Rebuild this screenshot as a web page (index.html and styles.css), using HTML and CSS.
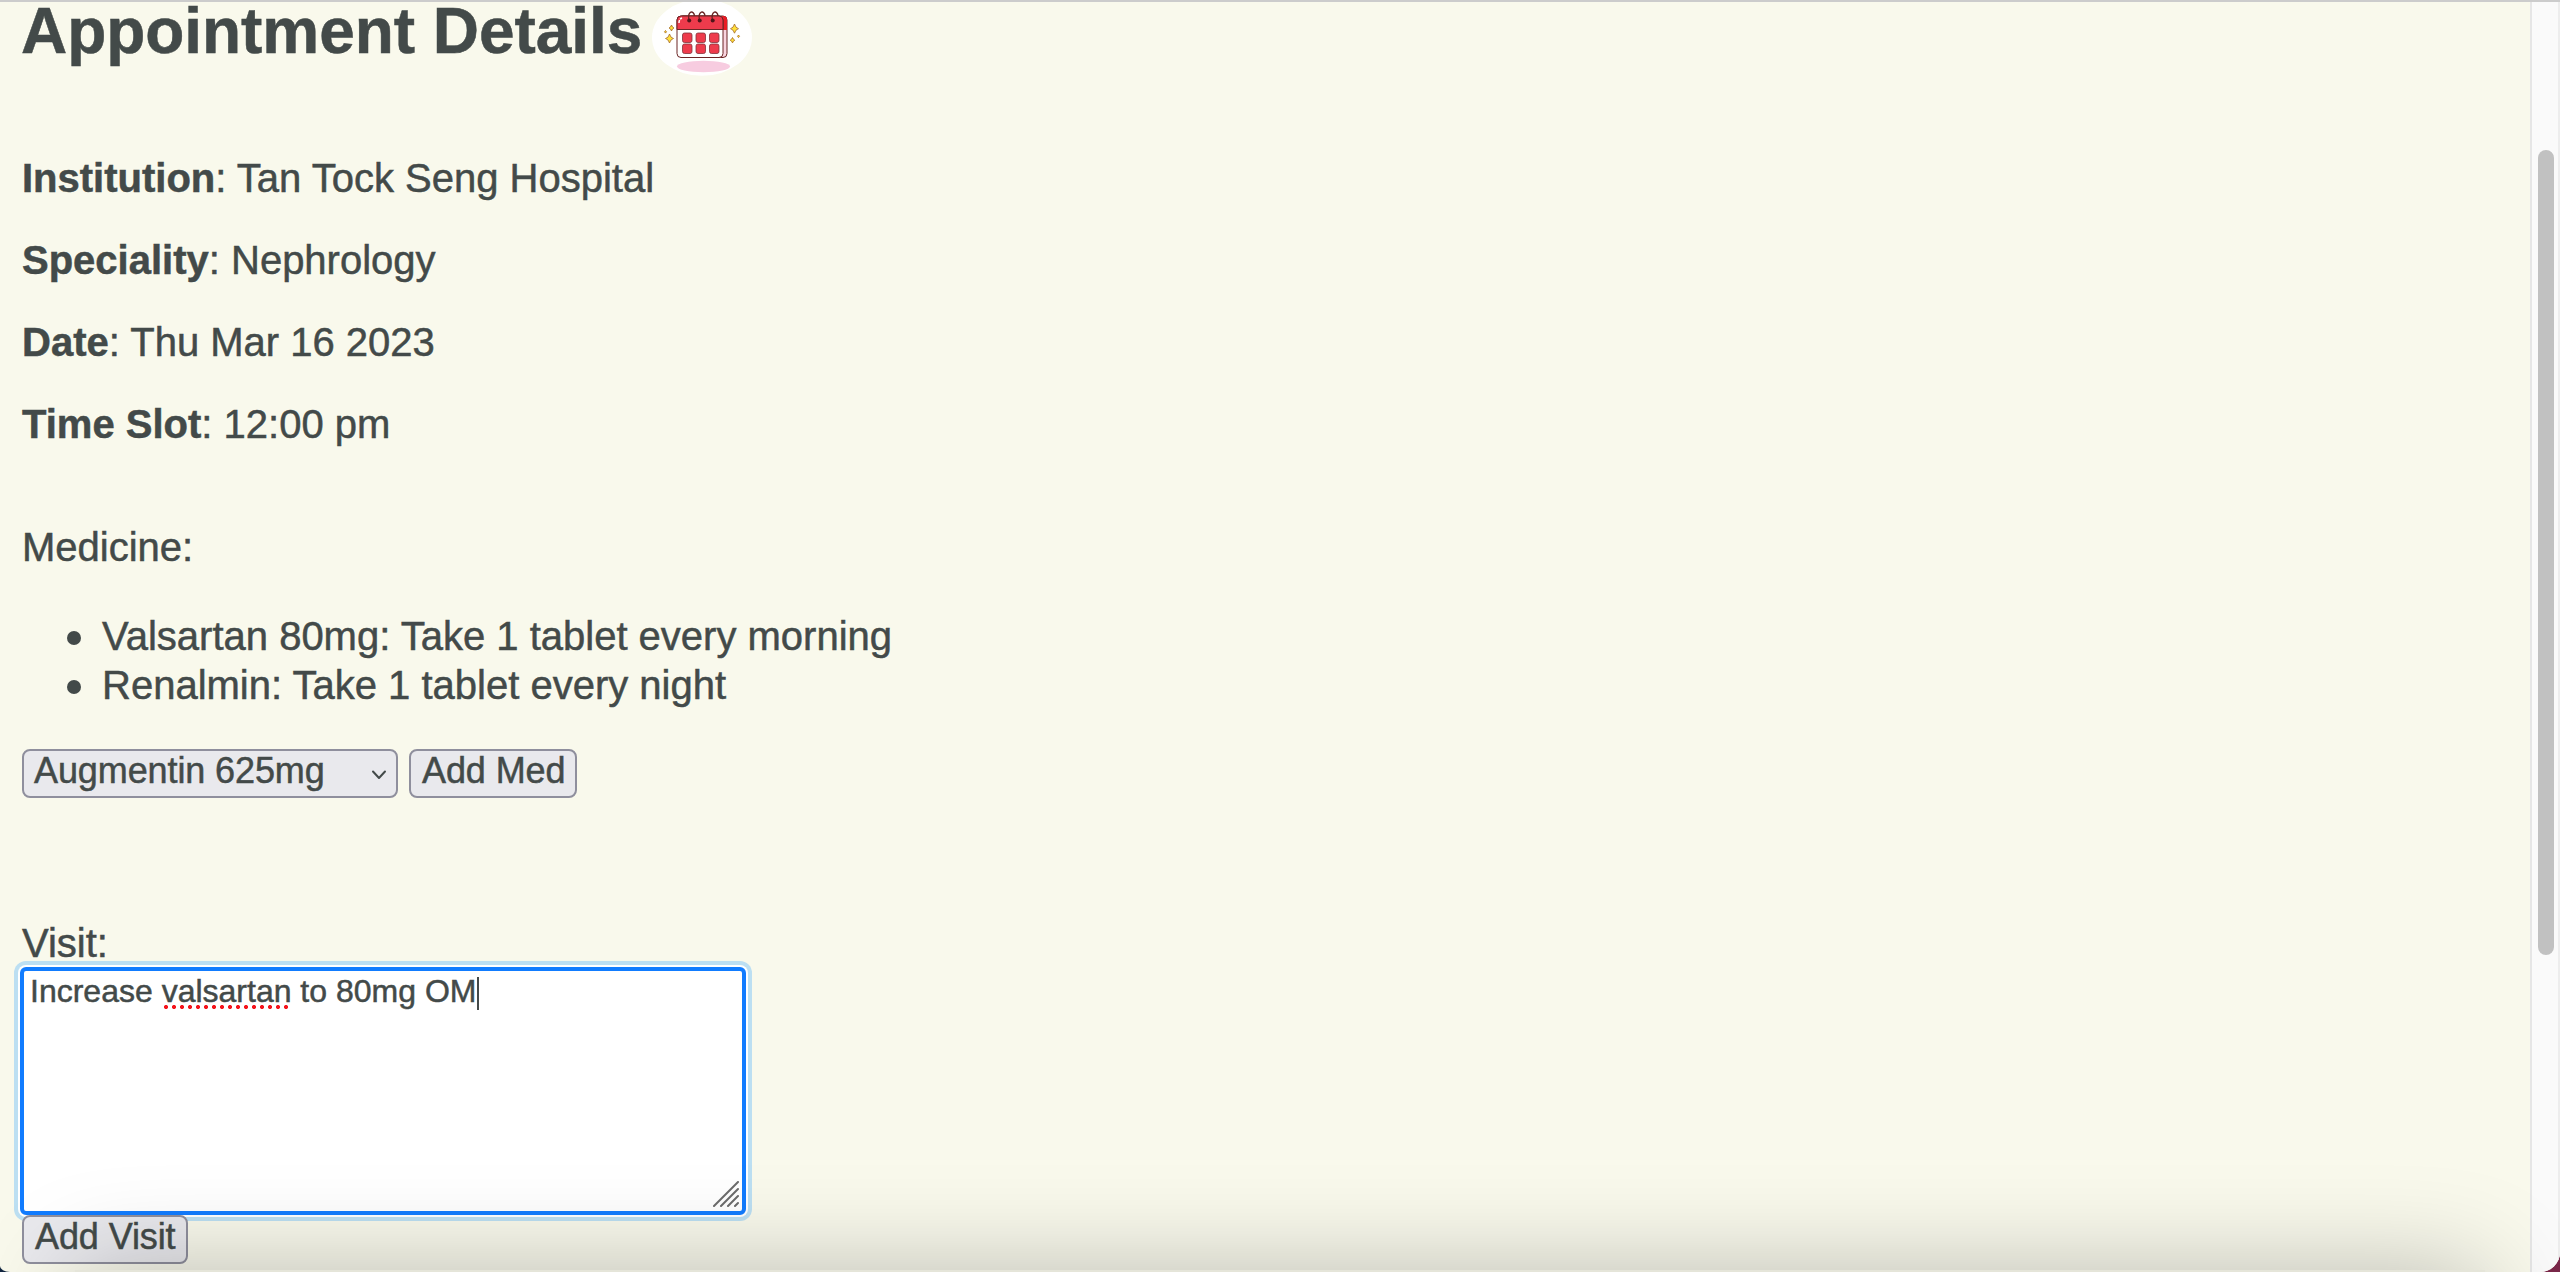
FILE: index.html
```html
<!DOCTYPE html>
<html lang="en">
<head>
<meta charset="utf-8">
<title>Appointment Details</title>
<link rel="stylesheet" href="styles.css">
</head>
<body>
<div class="window">
  <main class="page">
    <header class="heading">
      <h1>Appointment Details</h1>
      <svg class="calendar" viewBox="0 2 100 76" width="100" height="76">
        <ellipse cx="50" cy="37.5" rx="50" ry="38.3" fill="#fff"/>
        <ellipse cx="51.5" cy="66.500" rx="26.500" ry="5.700" fill="#f7cce0"/>
        <rect x="27" y="16" width="48" height="41.500" rx="4" fill="#f9d5df" stroke="#6b2525" stroke-width="1"/>
        <path d="M67 16h4a4 4 0 0 1 4 4v10h-6z" fill="#e91c24"/>
        <rect x="25" y="16" width="46" height="41.500" rx="4" fill="#fff" stroke="#6b2525" stroke-width="1"/>
        <path d="M25 29.500V20a4 4 0 0 1 4-4h38a4 4 0 0 1 4 4v9.500z" fill="#ee3b4c" stroke="#6b2525" stroke-width="1"/>
        <path d="M27 23q0-4 3-5" fill="none" stroke="#fff" stroke-width="1.500" stroke-dasharray="3 1"/>
        <g fill="#ee3b4c" stroke="#83323a" stroke-width=".8">
          <rect x="30.500" y="33" width="9.500" height="9.500" rx="2"/><rect x="44" y="33" width="9.500" height="9.500" rx="2"/><rect x="57.500" y="33" width="9.500" height="9.500" rx="2"/>
          <rect x="30.500" y="44" width="9.500" height="9.500" rx="2"/><rect x="44" y="44" width="9.500" height="9.500" rx="2"/><rect x="57.500" y="44" width="9.500" height="9.500" rx="2"/>
        </g>
        <path d="M37 21c-2-11 5-11 5.500-5M47.500 21c-2-11 5-11 5.500-5M60.500 21c-2-11 5-11 5.500-5" fill="none" stroke="#6b2525" stroke-width="1.400"/>
        <g fill="#501519"><circle cx="37.200" cy="20.500" r="2"/><circle cx="47.700" cy="20.500" r="2"/><circle cx="60.700" cy="20.500" r="2"/></g>
        <g fill="#ffe03a" stroke="#a66a20" stroke-width=".8">
          <path d="M17.500 34q1 4 4 4.500-3 .7-4 4.500-1-3.800-4-4.500 3-.5 4-4.500z"/>
          <path d="M19.500 25q.7 2.500 2.500 3-1.800.5-2.500 3-.7-2.500-2.500-3 1.800-.5 2.500-3z"/>
          <path d="M13.500 30.500l1 1.300-1 1.300-1-1.300z"/>
          <path d="M82.500 24q1 4 4 4.700-3 .7-4 4.500-1-3.800-4-4.500 3-.7 4-4.700z"/>
          <path d="M80.500 37.500q.7 2.200 2.300 2.700-1.600.5-2.300 2.700-.7-2.200-2.300-2.700 1.600-.5 2.300-2.700z"/>
          <path d="M86.500 35l1 1.300-1 1.300-1-1.300z"/>
        </g>
      </svg>
    </header>
    <section class="details">
      <p><strong>Institution</strong>: Tan Tock Seng Hospital</p>
      <p><strong>Speciality</strong>: Nephrology</p>
      <p><strong>Date</strong>: Thu Mar 16 2023</p>
      <p><strong>Time Slot</strong>: 12:00 pm</p>
    </section>
    <section class="medicine">
      <p>Medicine:</p>
      <ul>
        <li>Valsartan 80mg: Take 1 tablet every morning</li>
        <li>Renalmin: Take 1 tablet every night</li>
      </ul>
      <div class="controls">
        <div class="control select"><span>Augmentin 625mg</span>
          <svg width="16" height="12" viewBox="0 0 16 12"><path d="M2 2.500l6 6.500 6-6.500" fill="none" stroke="#434a49" stroke-width="2" stroke-linecap="round" stroke-linejoin="round"/></svg>
        </div>
        <button class="control">Add Med</button>
      </div>
    </section>
    <section class="visit">
      <p>Visit:</p>
      <div class="note">
        <span>Increase <span class="misspelt">valsartan</span> to 80mg OM</span><i class="caret"></i>
        <svg class="grip" width="26" height="26" viewBox="0 0 26 26"><path d="M1 25L25 1M8 25L25 8M15 25l10-10M22 25l3-3" stroke="#6c6c6c" stroke-width="2" stroke-linecap="round"/></svg>
      </div>
      <button class="control add-visit">Add Visit</button>
    </section>
  </main>
  <div class="scrollbar"><div class="thumb"></div></div>
  <div class="shade"></div>
</div>
</body>
</html>
```
FILE: styles.css
```css
* { box-sizing: border-box; }
body {
  margin: 0;
  height: 1272px;
  overflow: hidden;
  background: linear-gradient(90deg, #10243f 50%, #792748 50%);
  color: #434a49;
  font: 40px/49px "Liberation Sans", Arial, sans-serif;
  -webkit-text-stroke: .5px #434a49;
}
.window {
  position: relative;
  display: flex;
  height: 1272px;
  overflow: hidden;
  border-top: 2px solid #ccc;
  border-radius: 0 0 20px 10px / 0 0 20px 6px;
  background: #f9f9ec;
}
p, h1, ul { margin: 0; white-space: nowrap; }
.page { flex: 1; padding-left: 22px; }
.heading { display: flex; height: 152px; }
h1 {
  width: 631px;
  margin-left: -1px;
  font-size: 64px;
  line-height: 58px;
  letter-spacing: -.05px;
}
.calendar { display: block; flex: none; }
.details { display: flex; flex-direction: column; gap: 33px; }
.medicine { margin-top: 74px; }
.medicine ul { margin-top: 40px; padding-left: 80px; list-style: none; }
.medicine li { display: flex; align-items: center; }
.medicine li::before {
  content: "";
  width: 14px;
  height: 14px;
  margin: 2px 21px 0 -35px;
  border-radius: 50%;
  background: #434a49;
}
.controls { display: flex; gap: 11px; margin-top: 39px; }
.control {
  display: flex;
  align-items: center;
  height: 49px;
  padding: 0 10px 6px 11px;
  border: 2px solid #8f8f9d;
  border-radius: 8px;
  background: #e9e9ed;
  color: inherit;
  font: 36px/42px "Liberation Sans", Arial, sans-serif;
  letter-spacing: -.1px;
  white-space: nowrap;
}
.select { justify-content: space-between; width: 376px; padding-left: 10px; padding-right: 9px; }
.select svg { margin-top: 8px; }
.visit { margin-top: 121px; }
.note {
  position: relative;
  display: flex;
  width: 726px;
  height: 248px;
  margin: -1px 0 0 -2px;
  padding: 6px 6px;
  border: 4px solid #117cff;
  border-radius: 6px;
  background: #fff;
  box-shadow: 0 0 0 2px #fff, 0 0 0 6px #bcdff2;
  font-size: 32px;
  line-height: 28px;
  white-space: nowrap;
}
.misspelt {
  background: radial-gradient(circle, #f5141c 1.800px, transparent 2.300px) 0 100% / 8px 4px repeat-x;
}
.caret { width: 2px; height: 33px; margin-left: 1px; background: #434a49; }
.grip { position: absolute; right: 3px; bottom: 4px; }
.add-visit { position: relative; }
.scrollbar {
  width: 30px;
  padding: 148px 4px 0 6px;
  border-left: 2px solid #e6e6e6;
  border-right: 2px solid #ededed;
  background: #fafafa;
}
.thumb { height: 805px; border-radius: 8px; background: #c1c1c1; }
.shade {
  position: absolute;
  left: 75px;
  right: 75px;
  bottom: -198px;
  height: 200px;
  border-top: 2px solid rgba(0, 0, 0, .08);
  box-shadow: 0 0 100px rgba(0, 0, 0, .25);
}
```
